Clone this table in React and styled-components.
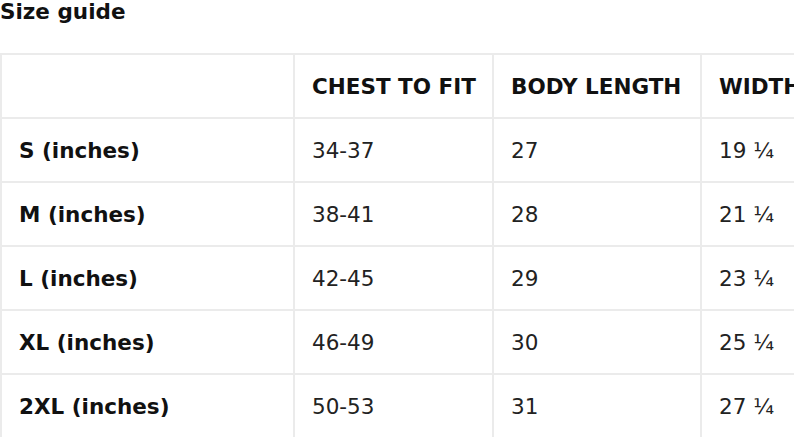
import React from "react";
import styled, { createGlobalStyle } from "styled-components";

const Global = createGlobalStyle`
  html, body { margin: 0; padding: 0; background: #fff; overflow: hidden; }
  body { font-family: "DejaVu Sans", Verdana, sans-serif; color: #1a1a1a; }
`;

const Page = styled.div`
  width: 794px;
  height: 437px;
  overflow: hidden;
`;

const Title = styled.h2`
  margin: 0;
  font-size: 21.5px;
  font-weight: bold;
  line-height: 24px;
  color: #111;
`;

const Table = styled.table`
  margin-top: 29px;
  border-collapse: collapse;
  table-layout: fixed;
  width: 900px;
`;

const Cell = styled.td`
  width: ${(p) => p.$w}px;
  height: 64px;
  padding: 0 0 0 17px;
  box-sizing: border-box;
  border: 2px solid #ebebeb;
  font-size: 21.5px;
  font-weight: ${(p) => (p.$bold ? "bold" : "normal")};
  color: ${(p) => (p.$bold ? "#111" : "#222")};
  white-space: nowrap;
  overflow: hidden;
  vertical-align: middle;
`;

const widths = [293, 199, 208, 200];
const headers = ["", "CHEST TO FIT", "BODY LENGTH", "WIDTH"];
const rows = [
  ["S (inches)", "34-37", "27", "19 ¼"],
  ["M (inches)", "38-41", "28", "21 ¼"],
  ["L (inches)", "42-45", "29", "23 ¼"],
  ["XL (inches)", "46-49", "30", "25 ¼"],
  ["2XL (inches)", "50-53", "31", "27 ¼"],
];

export default function App() {
  return (
    <Page>
      <Global />
      <Title>Size guide</Title>
      <Table>
        <tbody>
          <tr>
            {headers.map((h, i) => (
              <Cell key={i} $w={widths[i]} $bold>
                {h}
              </Cell>
            ))}
          </tr>
          {rows.map((r, ri) => (
            <tr key={ri}>
              {r.map((c, i) => (
                <Cell key={i} $w={widths[i]} $bold={i === 0}>
                  {c}
                </Cell>
              ))}
            </tr>
          ))}
        </tbody>
      </Table>
    </Page>
  );
}
